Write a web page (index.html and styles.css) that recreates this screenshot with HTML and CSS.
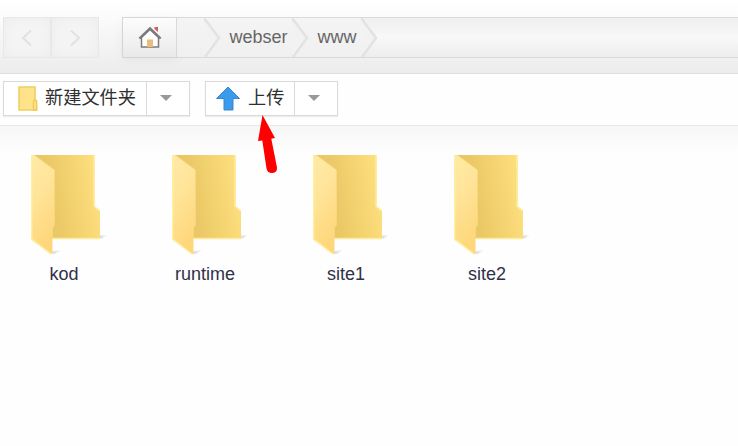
FILE: index.html
```html
<!DOCTYPE html>
<html lang="zh-CN">
<head>
<meta charset="utf-8">
<title>www</title>
<link rel="stylesheet" href="styles.css">
</head>
<body>
<svg class="defs" width="0" height="0" aria-hidden="true">
  <defs>
    <linearGradient id="back" x1="0" y1=".6" x2="1" y2=".4">
      <stop offset="0" stop-color="#e9c45f"/><stop offset=".35" stop-color="#ebc967"/><stop offset="1" stop-color="#ffe07e"/>
    </linearGradient>
    <linearGradient id="flap" x1="0" y1="0" x2=".3" y2="1">
      <stop offset="0" stop-color="#ffeaa5"/><stop offset=".4" stop-color="#ffe59b"/><stop offset="1" stop-color="#fed77b"/>
    </linearGradient>
    <linearGradient id="shade" x1="0" y1="0" x2="1" y2="0">
      <stop offset="0" stop-color="#dcdce0"/><stop offset="1" stop-color="#f8f8f8"/>
    </linearGradient>
    <symbol id="folder" viewBox="0 0 80 100">
      <path d="M69 83.500v-3l7-.5-5 3.500z" fill="url(#shade)"/>
      <path d="M0 0h63.500v51l5.500 4.500v28H1z" fill="url(#back)"/>
      <path d="M63 0v51.500l5.500 4.500M69 83.500H22" fill="none" stroke="#ffec9b" stroke-width="1.400"/>
      <path d="M0 84.200h23V99H0z" fill="#fefefe"/>
      <path d="M21.500 99v-3l9-1-6.500 4z" fill="url(#shade)"/>
      <path d="M0 0h3l20.500 15v55l-2 3v26h-2L0 84.500z" fill="url(#flap)"/>
      <path d="M.7 0v84L20 99" fill="none" stroke="#fff09f" stroke-width="1.400"/>
      <path d="M3.500 0L23.500 15v55l-2 3v10" fill="none" stroke="#f7dc87" stroke-width=".6"/>
    </symbol>
  </defs>
</svg>
<header class="header">
  <div class="history">
    <button class="nav" aria-label="后退"><svg width="12" height="18" viewBox="0 0 12 18"><path d="M10 1.500L2 9l8 7.500"/></svg></button>
    <button class="nav" aria-label="前进"><svg width="12" height="18" viewBox="0 0 12 18"><path d="M2 1.500L10 9l-8 7.500"/></svg></button>
  </div>
  <nav class="address">
    <a class="home"><svg width="24" height="24" viewBox="0 0 24 24">
      <path d="M16.500 1h3.500v5l-3.500-3z" fill="#cf6456"/>
      <path d="M3.500 11.500l8.500-8 8.500 8V21h-17z" fill="#fff" stroke="#7b7b7b" stroke-width="1.500"/>
      <path d="M9 13.500h6V21H9z" fill="#e9bd78"/>
      <path d="M1.300 12.500L12 2.200l10.700 10.300" fill="none" stroke="#7b7b7b" stroke-width="2.200"/>
    </svg></a>
    <span class="crumb first"><svg class="sep" width="18" height="39" viewBox="0 0 18 39"><path d="M0 0L15 20 1 39"/></svg></span>
    <span class="crumb webser">webser<svg class="sep" width="18" height="39" viewBox="0 0 18 39"><path d="M0 0L15 20 1 39"/></svg></span>
    <span class="crumb www">www<svg class="sep" width="18" height="39" viewBox="0 0 18 39"><path d="M0 0L15 20 1 39"/></svg></span>
  </nav>
</header>
<div class="toolbar">
  <div class="group">
    <button class="action new"><svg width="21" height="25" viewBox="0 0 21 25">
      <path d="M2 1h16v13l1.500 1v9H2z" fill="#ffe388" stroke="#edcf66" stroke-width="1.600"/>
      <path d="M16.500 24v-8q0-2 1.500-2t1.500 2v8z" fill="#ffe58f" stroke="#edca55" stroke-width="1.400"/>
    </svg><span>新建文件夹</span></button>
    <button class="more" aria-label="更多"><i class="caret"></i></button>
  </div>
  <div class="group">
    <button class="action upload"><svg width="24" height="25" viewBox="0 0 24 25"><path d="M12 1L23.500 12.500H17V24H8V12.500H.5z" fill="#3a9aec" stroke="#3687cc" stroke-linejoin="round"/></svg><span>上传</span></button>
    <button class="more" aria-label="更多"><i class="caret"></i></button>
  </div>
</div>
<main class="files">
  <div class="file"><svg class="icon" width="80" height="100"><use href="#folder"/></svg><span>kod</span></div>
  <div class="file"><svg class="icon" width="80" height="100"><use href="#folder"/></svg><span>runtime</span></div>
  <div class="file"><svg class="icon" width="80" height="100"><use href="#folder"/></svg><span>site1</span></div>
  <div class="file"><svg class="icon" width="80" height="100"><use href="#folder"/></svg><span>site2</span></div>
</main>
<svg class="pointer" width="24" height="62" viewBox="0 0 24 62"><path d="M6.500 1L19 24l-3.700.8L21 53.500q.3 5-4.500 5.500-5 .3-6-4.500L6.300 26.500 2 27z" fill="#f00"/></svg>
</body>
</html>
```
FILE: styles.css
```css
* { box-sizing: border-box; }
body {
  margin: 0;
  height: 446px;
  overflow: hidden;
  display: flex;
  flex-direction: column;
  background: #fefefe;
  font: 18px/22px "Liberation Sans", "Noto Sans CJK SC", sans-serif;
  color: #303048;
}
svg { display: block; flex: none; }
.defs { position: absolute; }
button { padding: 0; border: 0; background: none; font: inherit; color: inherit; }
.header {
  display: flex;
  gap: 23px;
  height: 74px;
  padding: 17px 0 0 3px;
  border-bottom: 1px solid #e0e0e0;
  background: linear-gradient(#fff, #fcfcfc 20%, #ececec);
}
.history { display: flex; width: 96px; height: 41px; }
.nav {
  display: flex;
  align-items: center;
  justify-content: center;
  width: 48px;
  border: 1px solid #e8e8e8;
  background: #f4f4f4;
  box-shadow: inset 0 0 12px #ececec;
}
.nav path { fill: none; stroke: #e1e1e1; stroke-width: 2; }
.address {
  display: flex;
  flex: 1;
  height: 41px;
  border: 1px solid #d9d9d9;
  border-right: 0;
  background: linear-gradient(#efefef, #f8f8f8 50%, #ededed);
}
.home {
  display: flex;
  align-items: center;
  justify-content: center;
  width: 54px;
  border-right: 1px solid #d9d9d9;
  background: linear-gradient(#fdfdfd, #e9e9e9);
  box-shadow: 0 3px 12px rgba(0, 0, 0, .05);
}
.crumb {
  position: relative;
  height: 39px;
  line-height: 38px;
  color: #666;
  background: linear-gradient(#f4f4f4, #f0f0f0);
}
.first { width: 27px; }
.webser { width: 88px; padding-left: 25.500px; }
.www { width: 69px; padding-left: 25.500px; }
.sep { position: absolute; left: 100%; top: 0; z-index: 1; }
.sep path { fill: #f2f2f2; stroke: #e2e2e2; stroke-width: 2.500; }
.toolbar {
  display: flex;
  gap: 15px;
  height: 52px;
  padding: 7px 3px;
  border-bottom: 1px solid #e9e9e9;
}
.group {
  display: flex;
  height: 35px;
  border: 1px solid #dadada;
  background: #fff;
  box-shadow: 0 1px 1px #ededed;
}
.action { display: flex; align-items: center; color: #303030; font-size: 18.200px; }
.action span { line-height: 30px; padding-bottom: 1px; white-space: nowrap; }
.new { width: 142px; padding-left: 13px; gap: 7px; }
.upload { width: 88px; padding-left: 10px; gap: 8px; }
.more {
  display: flex;
  align-items: center;
  justify-content: center;
  width: 43px;
  padding: 0 5px 2px 0;
  border-left: 1px solid #dadada;
}
.caret { border: 6px solid transparent; border-top-color: #999; border-bottom: 0; }
.files {
  display: flex;
  flex: 1;
  gap: 13px;
  padding-top: 29px;
  background: linear-gradient(#f6f6f6, #fefefe 27px);
}
.file {
  display: flex;
  flex-direction: column;
  align-items: center;
  gap: 8px;
  width: 128px;
}
.icon { margin-left: 14px; }
.pointer { position: absolute; left: 256px; top: 114px; }
```
